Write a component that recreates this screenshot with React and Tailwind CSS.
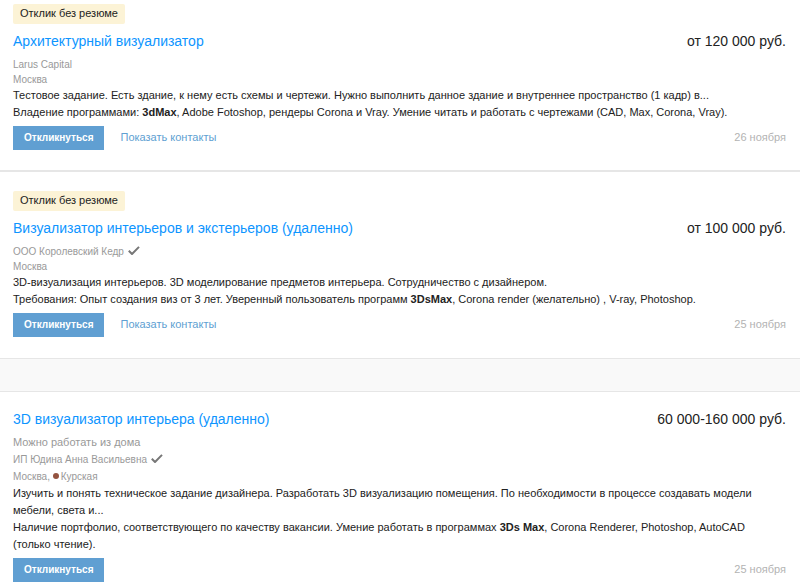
import React from "react";

const vacancies = [
  {
    id: 1,
    noResume: true,
    title: "Архитектурный визуализатор",
    salary: "от 120 000 руб.",
    company: "Larus Capital",
    city: "Москва",
    duties:
      "Тестовое задание. Есть здание, к нему есть схемы и чертежи. Нужно выполнить данное здание и внутреннее пространство (1 кадр) в...",
    skills: (
      <>
        Владение программами: <b>3dMax</b>, Adobe Fotoshop, рендеры Corona и
        Vray. Умение читать и работать с чертежами (CAD, Max, Corona, Vray).
      </>
    ),
    contacts: true,
    date: "26 ноября",
  },
  {
    id: 2,
    noResume: true,
    title: "Визуализатор интерьеров и экстерьеров (удаленно)",
    salary: "от 100 000 руб.",
    company: "ООО Королевский Кедр",
    verified: true,
    city: "Москва",
    duties:
      "3D-визуализация интерьеров. 3D моделирование предметов интерьера. Сотрудничество с дизайнером.",
    skills: (
      <>
        Требования: Опыт создания виз от 3 лет. Уверенный пользователь программ{" "}
        <b>3DsMax</b>, Corona render (желательно) , V-ray, Photoshop.
      </>
    ),
    contacts: true,
    date: "25 ноября",
  },
  {
    id: 3,
    title: "3D визуализатор интерьера (удаленно)",
    salary: "60 000-160 000 руб.",
    remote: true,
    company: "ИП Юдина Анна Васильевна",
    verified: true,
    city: "Москва",
    metro: "Курская",
    duties:
      "Изучить и понять техническое задание дизайнера. Разработать 3D визуализацию помещения. По необходимости в процессе создавать модели мебели, света и...",
    skills: (
      <>
        Наличие портфолио, соответствующего по качеству вакансии. Умение
        работать в программах <b>3Ds Max</b>, Corona Renderer, Photoshop,
        AutoCAD (только чтение).
      </>
    ),
    date: "25 ноября",
  },
];

const CheckMark = () => (
  <svg
    className="inline-block ml-1 w-3 h-[10px] align-[-1px]"
    viewBox="0 0 12 10"
    fill="none"
    role="img"
    aria-label="Проверенный работодатель"
  >
    <path
      d="M0.8 4.8 L4 8 L11 0.9"
      stroke="#777"
      strokeWidth="2"
      strokeLinejoin="round"
    />
  </svg>
);

const Vacancy = ({ item, className }) => (
  <article className={`pl-[13px] pr-[14px] ${className}`}>
    {item.noResume && (
      <div className="mb-[6px] flex">
        <span className="rounded-xs bg-[#fcf3d6] px-[7px] pb-[2px] text-[11px] leading-[18px]">
          Отклик без резюме
        </span>
      </div>
    )}

    <div className="flex items-start justify-between gap-4 text-[14px] leading-[22px]">
      <h2>
        <a href="#" className="text-[#0d95ff]">
          {item.title}
        </a>
      </h2>
      <span className="whitespace-nowrap">{item.salary}</span>
    </div>

    <div
      className={`text-[10px] text-[#999] ${
        item.remote ? "mt-1 leading-[17px]" : "mt-[5px] leading-[15px]"
      }`}
    >
      {item.remote && <div className="text-[11px]">Можно работать из дома</div>}
      <div>
        <a href="#">{item.company}</a>
        {item.verified && <CheckMark />}
      </div>
      <div>
        {item.city}
        {item.metro && (
          <>
            ,{" "}
            <span className="inline-block mr-[2px] size-[6px] rounded-full bg-[#945340] align-[1px]" />
            {item.metro}
          </>
        )}
      </div>
    </div>

    <div className="pr-4 text-[11px] leading-[17px]">
      <p>{item.duties}</p>
      <p>{item.skills}</p>
    </div>

    <div className="mt-[5px] flex items-start text-[11px] leading-[22px]">
      <button
        type="button"
        className="bg-[#609fd2] px-[11px] text-[10px] leading-6 font-bold text-white"
      >
        Откликнуться
      </button>
      {item.contacts && (
        <button type="button" className="ml-4 text-[#609fd2]">
          Показать контакты
        </button>
      )}
      <time className="ml-auto text-[#b3b3b3]">{item.date}</time>
    </div>
  </article>
);

const App = () => (
  <main className="bg-white font-['Liberation_Sans',Arial,sans-serif] text-[#222]">
    <Vacancy item={vacancies[0]} className="pt-1 pb-5" />
    <hr className="border-t-2 border-[#e6e6e6]" />
    <Vacancy item={vacancies[1]} className="pt-[19px] pb-[21px]" />
    <div className="h-[34px] border-y border-[#e6e6e6] bg-[#f9f9f9]" />
    <Vacancy item={vacancies[2]} className="pt-4 pb-1" />
  </main>
);

export default App;
